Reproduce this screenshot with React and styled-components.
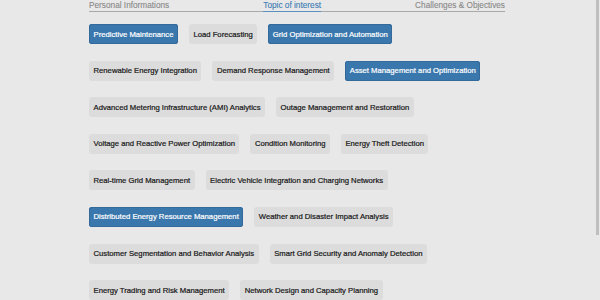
import React from "react";
import styled, { createGlobalStyle } from "styled-components";

const Global = createGlobalStyle`
  html, body { margin: 0; padding: 0; background: #e8e8e8; overflow: hidden; }
  body { font-family: "Liberation Sans", Arial, Helvetica, sans-serif; }
`;

const Page = styled.div`
  width: 594px;
  display: flex;
  justify-content: center;
`;

const Panel = styled.div`
  width: 416px;
  display: flex;
  flex-direction: column;
  gap: 12px;
`;

const Tabs = styled.div`
  display: flex;
  justify-content: space-between;
  border-bottom: 1px solid #a9a9a9;
  height: 11px;
`;

const Tab = styled.div`
  font-size: 8.25px;
  line-height: 11px;
  color: ${(p) => (p.$active ? "#3c7bb4" : "#888888")};
  -webkit-text-stroke: 0.1px currentColor;
  ${(p) => (p.$active ? "border-bottom: 1px solid #5a8fc0; margin-bottom: -1px;" : "")}
`;

const Topics = styled.div`
  display: flex;
  flex-wrap: wrap;
  column-gap: 11px;
  row-gap: 16.6px;
`;

const Pill = styled.div`
  height: 20px;
  box-sizing: border-box;
  padding: 0 4.5px;
  display: flex;
  align-items: center;
  font-size: 7.7px;
  white-space: nowrap;
  border-radius: 3px;
  -webkit-text-stroke: 0.2px currentColor;
  background: ${(p) => (p.$on ? "#3a77ad" : "#dcdcdc")};
  color: ${(p) => (p.$on ? "#ffffff" : "#161616")};
  box-shadow: ${(p) => (p.$on ? "inset 0 0 0 1px #33699b" : "none")};
`;

const Thumb = styled.div`
  position: fixed;
  top: 0;
  right: 1px;
  width: 3px;
  height: 235px;
  background: #bfbfbf;
`;

const topics = [
  ["Predictive Maintenance", true],
  ["Load Forecasting", false],
  ["Grid Optimization and Automation", true],
  ["Renewable Energy Integration", false],
  ["Demand Response Management", false],
  ["Asset Management and Optimization", true],
  ["Advanced Metering Infrastructure (AMI) Analytics", false],
  ["Outage Management and Restoration", false],
  ["Voltage and Reactive Power Optimization", false],
  ["Condition Monitoring", false],
  ["Energy Theft Detection", false],
  ["Real-time Grid Management", false],
  ["Electric Vehicle Integration and Charging Networks", false],
  ["Distributed Energy Resource Management", true],
  ["Weather and Disaster Impact Analysis", false],
  ["Customer Segmentation and Behavior Analysis", false],
  ["Smart Grid Security and Anomaly Detection", false],
  ["Energy Trading and Risk Management", false],
  ["Network Design and Capacity Planning", false],
];

export default function App() {
  return (
    <>
      <Global />
      <Page>
        <Panel>
          <Tabs>
            <Tab>Personal Informations</Tab>
            <Tab $active>Topic of interest</Tab>
            <Tab>Challenges &amp; Objectives</Tab>
          </Tabs>
          <Topics>
            {topics.map(([t, on]) => (
              <Pill key={t} $on={on}>
                {t}
              </Pill>
            ))}
          </Topics>
        </Panel>
      </Page>
      <Thumb />
    </>
  );
}
